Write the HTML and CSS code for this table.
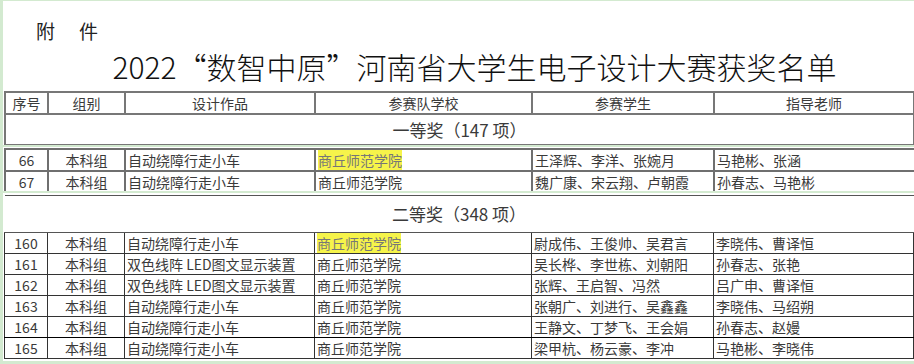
FILE: index.html
```html
<!DOCTYPE html>
<html>
<head>
  <meta charset="UTF-8">
  <title>获奖名单</title>
  <link rel="stylesheet" href="styles.css">
</head>
<body>
  <div class="sheet sheet-top">
    <div class="annex"><span>附</span><span>件</span></div>
    <h1 class="title">2022“数智中原”河南省大学生电子设计大赛获奖名单</h1>
    <table class="grid grid-head">
      <colgroup>
        <col class="c-no"><col class="c-group"><col class="c-work"><col class="c-school"><col class="c-students"><col class="c-teachers">
      </colgroup>
      <tr class="head-row">
        <th>序号</th>
        <th>组别</th>
        <th>设计作品</th>
        <th>参赛队学校</th>
        <th>参赛学生</th>
        <th>指导老师</th>
      </tr>
      <tr class="prize-row first-prize">
        <td colspan="6">一等奖（147 项）</td>
      </tr>
    </table>
  </div>

  <div class="sheet sheet-mid">
    <table class="grid grid-wide">
      <colgroup>
        <col class="c-no"><col class="c-group"><col class="c-work"><col class="c-school"><col class="c-students"><col class="c-teachers-wide">
      </colgroup>
      <tr>
        <td class="num">66</td>
        <td class="num">本科组</td>
        <td>自动绕障行走小车</td>
        <td><span class="hl">商丘师范学院</span></td>
        <td>王泽辉、李洋、张婉月</td>
        <td>马艳彬、张涵</td>
      </tr>
      <tr>
        <td class="num">67</td>
        <td class="num">本科组</td>
        <td>自动绕障行走小车</td>
        <td>商丘师范学院</td>
        <td>魏广康、宋云翔、卢朝霞</td>
        <td>孙春志、马艳彬</td>
      </tr>
    </table>
  </div>

  <div class="sheet sheet-bottom">
    <table class="grid grid-second">
      <colgroup>
        <col class="c-no"><col class="c-group"><col class="c-work"><col class="c-school"><col class="c-students"><col class="c-teachers">
      </colgroup>
      <tr class="prize-row second-prize">
        <td colspan="6">二等奖（348 项）</td>
      </tr>
      <tr>
        <td class="num">160</td>
        <td class="num">本科组</td>
        <td>自动绕障行走小车</td>
        <td><span class="hl">商丘师范学院</span></td>
        <td>尉成伟、王俊帅、吴君言</td>
        <td>李晓伟、曹译恒</td>
      </tr>
      <tr>
        <td class="num">161</td>
        <td class="num">本科组</td>
        <td>双色线阵 LED图文显示装置</td>
        <td>商丘师范学院</td>
        <td>吴长桦、李世栋、刘朝阳</td>
        <td>孙春志、张艳</td>
      </tr>
      <tr>
        <td class="num">162</td>
        <td class="num">本科组</td>
        <td>双色线阵 LED图文显示装置</td>
        <td>商丘师范学院</td>
        <td>张辉、王启智、冯然</td>
        <td>吕广申、曹译恒</td>
      </tr>
      <tr>
        <td class="num">163</td>
        <td class="num">本科组</td>
        <td>自动绕障行走小车</td>
        <td>商丘师范学院</td>
        <td>张朝广、刘进行、吴鑫鑫</td>
        <td>李晓伟、马绍朔</td>
      </tr>
      <tr class="dark-line">
        <td class="num">164</td>
        <td class="num">本科组</td>
        <td>自动绕障行走小车</td>
        <td>商丘师范学院</td>
        <td>王静文、丁梦飞、王会娟</td>
        <td>孙春志、赵嫚</td>
      </tr>
      <tr>
        <td class="num">165</td>
        <td class="num">本科组</td>
        <td>自动绕障行走小车</td>
        <td>商丘师范学院</td>
        <td>梁甲杭、杨云豪、李冲</td>
        <td>马艳彬、李晓伟</td>
      </tr>
    </table>
  </div>
</body>
</html>
```

FILE: styles.css
```css
html, body {
  margin: 0;
  padding: 0;
}
body {
  background: #d3ead0;
  padding-top: 1px;
  height: 363px;
  overflow: hidden;
  font-family: "Noto Sans CJK SC", "Noto Sans", sans-serif;
  color: #3a3a3a;
}
.sheet {
  background: #fff;
  margin-left: 3px;
  overflow: hidden;
}
.sheet-top {
  height: 144px;
  padding-top: 20px;
  box-sizing: border-box;
}
.sheet-mid {
  margin-top: 2px;
  padding-top: 1px;
  height: 44px;
  box-sizing: border-box;
}
.sheet-bottom {
  margin-top: 2px;
  padding-top: 2px;
  height: 168px;
  box-sizing: border-box;
}
.annex {
  display: flex;
  gap: 24px;
  padding-left: 33px;
  font-size: 19px;
  line-height: 20px;
  color: #222;
}
.title {
  margin: 7px 0 0 0;
  padding-left: 32px;
  text-align: center;
  font-size: 30px;
  line-height: 36px;
  font-weight: 300;
  color: #111;
  white-space: nowrap;
}
.grid {
  border-collapse: collapse;
  table-layout: fixed;
  margin-left: 1px;
  width: 909px;
  font-size: 14px;
}
.grid-head {
  margin-top: 7px;
}
.grid-wide {
  width: 940px;
}
.c-no { width: 43px; }
.c-group { width: 77px; }
.c-work { width: 190px; }
.c-school { width: 217px; }
.c-students { width: 182px; }
.c-teachers { width: 200px; }
.c-teachers-wide { width: 231px; }
.grid th,
.grid td {
  border: 1px solid #333;
  padding: 0 0 0 2px;
  height: 20px;
  line-height: 20px;
  text-align: left;
  white-space: nowrap;
  overflow: hidden;
}
.grid th {
  border: 2px solid #777;
  font-weight: 400;
  text-align: center;
  padding: 0;
  height: 18px;
}
.grid td.num {
  text-align: center;
  padding: 0;
}
.grid-wide td {
  border: 2px solid #6f6f6f;
  height: 19px;
}
.prize-row td {
  text-align: center;
  font-size: 17px;
  padding: 0;
}
.first-prize td {
  height: 29px;
  border: 2px solid #777;
  border-top: none;
}
.second-prize td {
  height: 36px;
  border: 1px solid #555;
  border-left: none;
  border-right: none;
}
.dark-line td {
  border-bottom-color: #000;
}
.hl {
  background: #f6f44a;
  color: #777;
}
```
